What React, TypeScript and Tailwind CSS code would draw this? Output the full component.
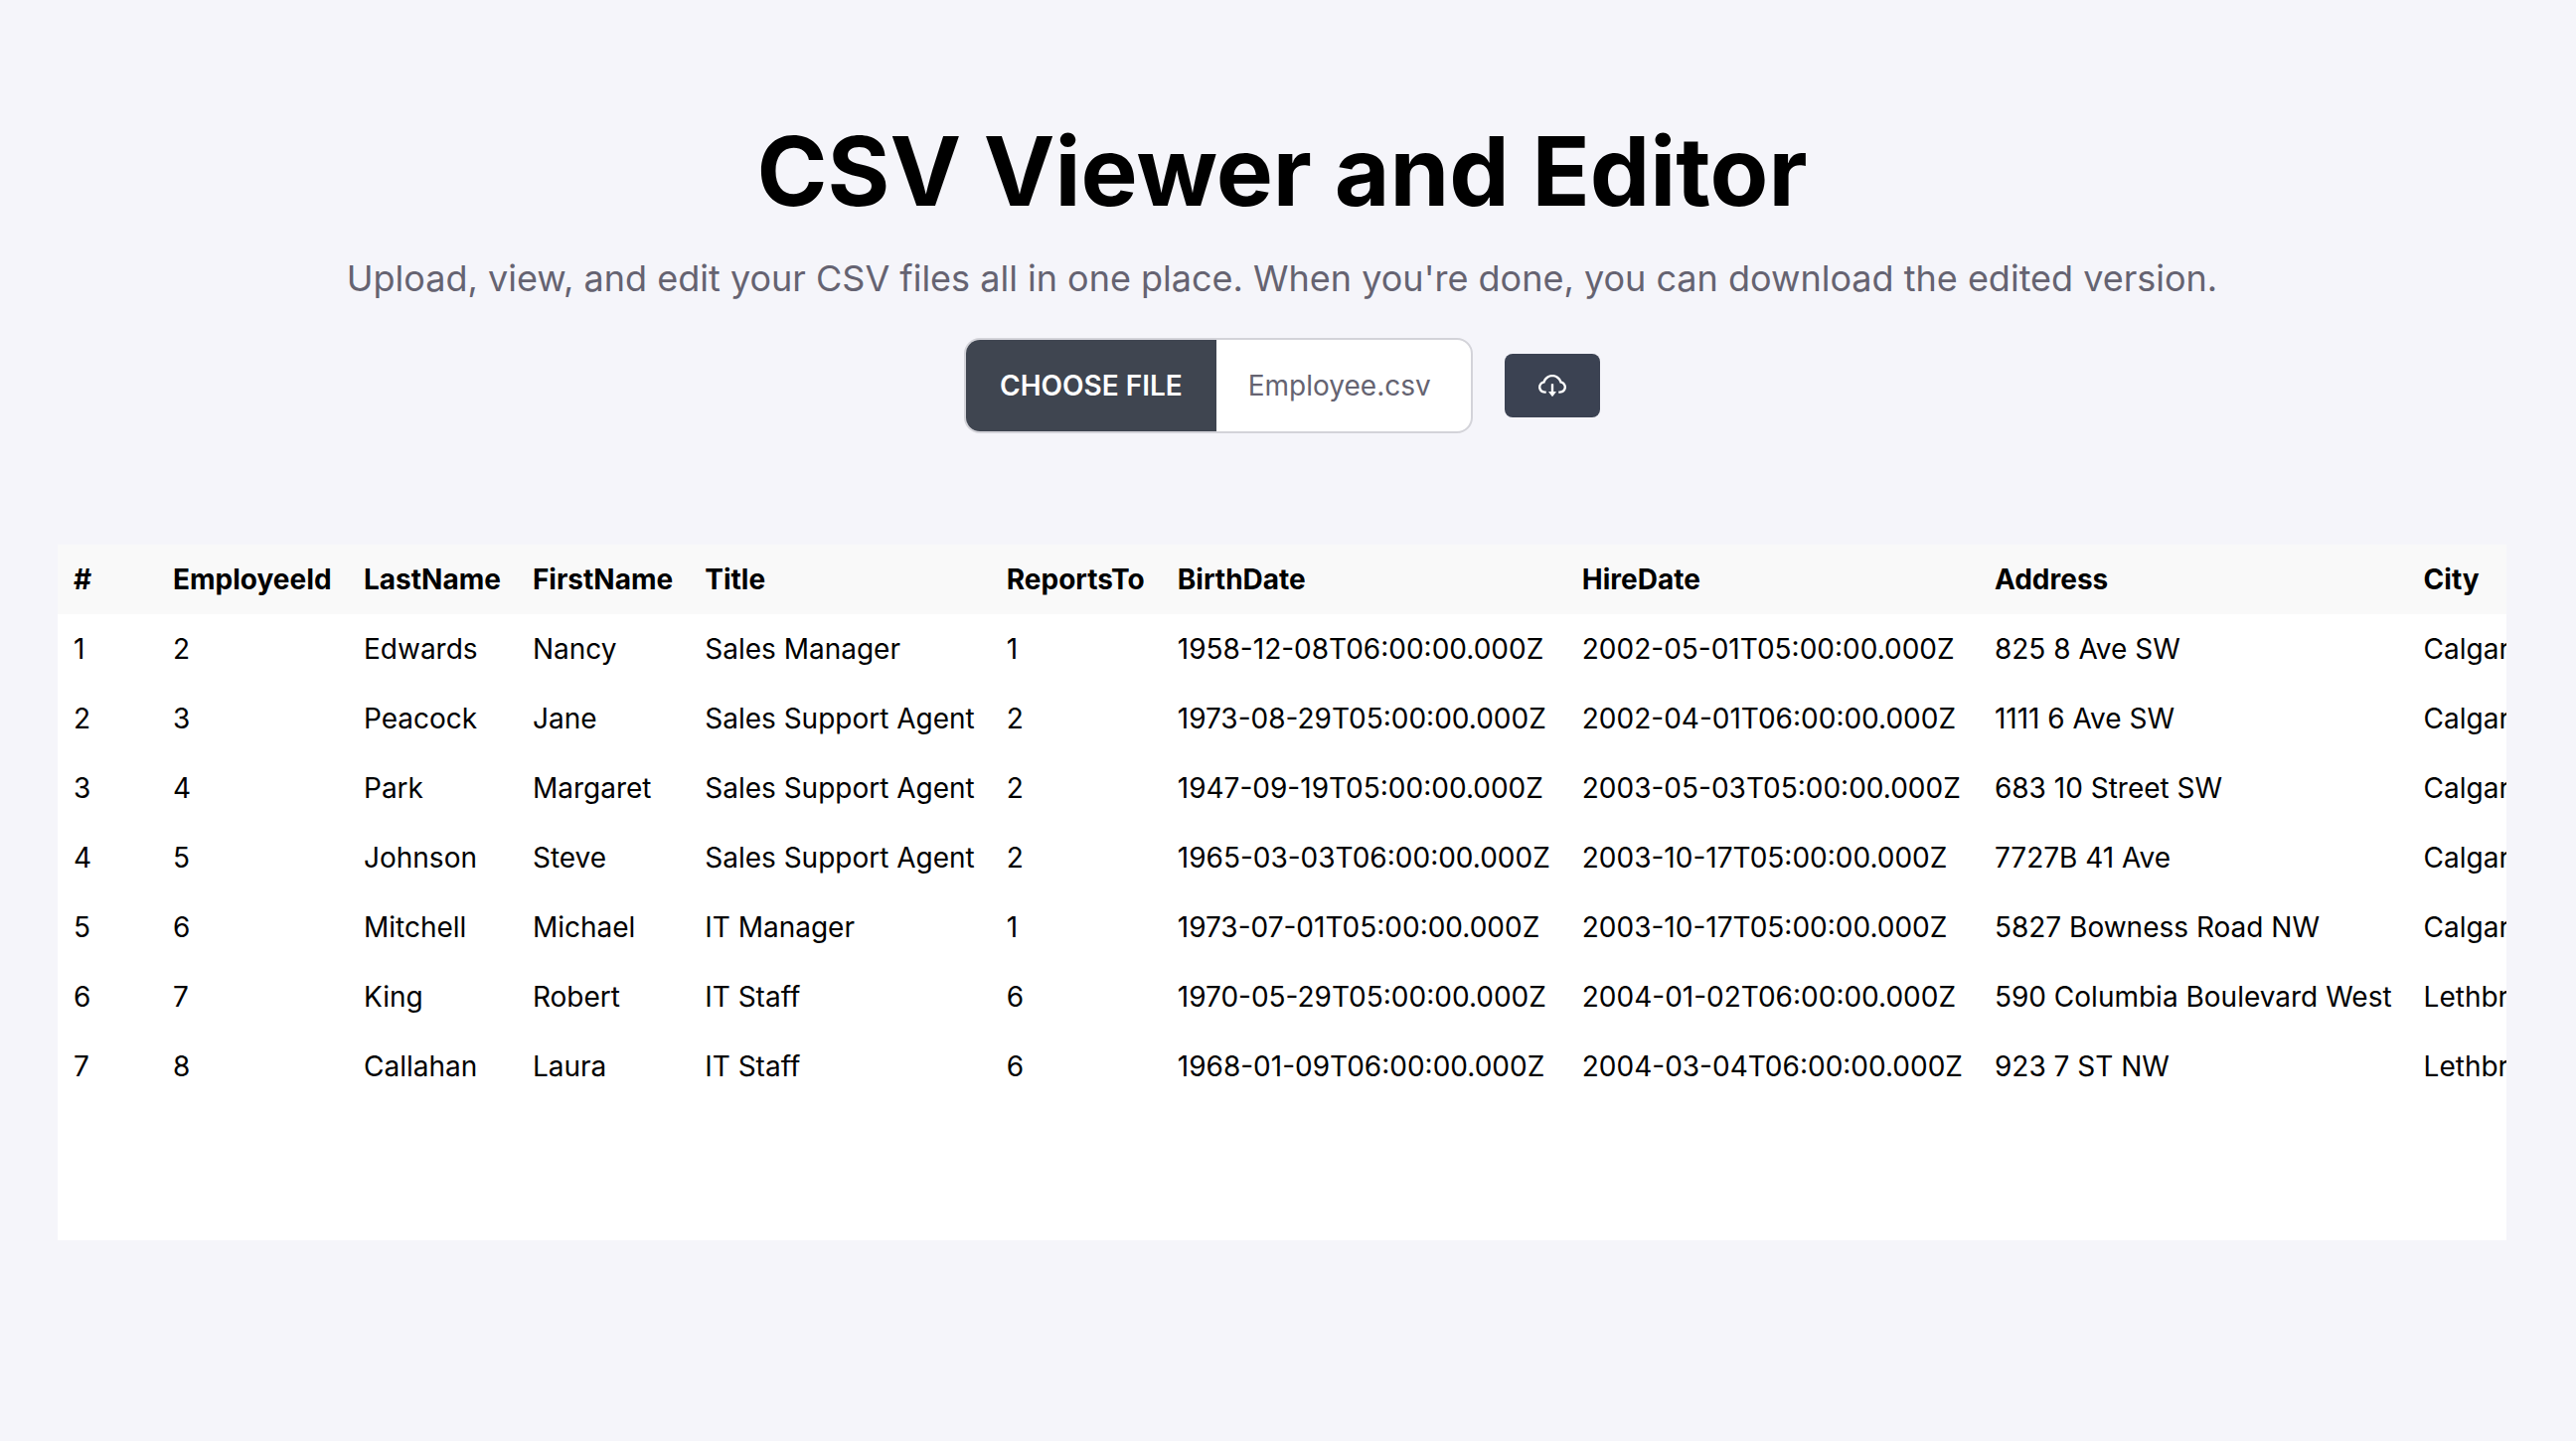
import { AiOutlineCloudDownload } from "react-icons/ai";

const columns = [
  { name: "#", width: "min-w-[100px]" },
  { name: "EmployeeId", width: "min-w-48" },
  { name: "LastName", width: "" },
  { name: "FirstName", width: "" },
  { name: "Title", width: "" },
  { name: "ReportsTo", width: "min-w-[172px]" },
  { name: "BirthDate", width: "" },
  { name: "HireDate", width: "" },
  { name: "Address", width: "" },
  { name: "City", width: "" },
];

const rows = [
  ["1", "2", "Edwards", "Nancy", "Sales Manager", "1", "1958-12-08T06:00:00.000Z", "2002-05-01T05:00:00.000Z", "825 8 Ave SW", "Calgary"],
  ["2", "3", "Peacock", "Jane", "Sales Support Agent", "2", "1973-08-29T05:00:00.000Z", "2002-04-01T06:00:00.000Z", "1111 6 Ave SW", "Calgary"],
  ["3", "4", "Park", "Margaret", "Sales Support Agent", "2", "1947-09-19T05:00:00.000Z", "2003-05-03T05:00:00.000Z", "683 10 Street SW", "Calgary"],
  ["4", "5", "Johnson", "Steve", "Sales Support Agent", "2", "1965-03-03T06:00:00.000Z", "2003-10-17T05:00:00.000Z", "7727B 41 Ave", "Calgary"],
  ["5", "6", "Mitchell", "Michael", "IT Manager", "1", "1973-07-01T05:00:00.000Z", "2003-10-17T05:00:00.000Z", "5827 Bowness Road NW", "Calgary"],
  ["6", "7", "King", "Robert", "IT Staff", "6", "1970-05-29T05:00:00.000Z", "2004-01-02T06:00:00.000Z", "590 Columbia Boulevard West", "Lethbridge"],
  ["7", "8", "Callahan", "Laura", "IT Staff", "6", "1968-01-09T06:00:00.000Z", "2004-03-04T06:00:00.000Z", "923 7 ST NW", "Lethbridge"],
];

function FilePicker() {
  return (
    <label
      htmlFor="csv-file"
      className="relative flex h-24 w-[512px] cursor-pointer overflow-hidden rounded-2xl border-2 border-[#d3d3d9] bg-white text-[28px]"
    >
      <input id="csv-file" type="file" accept=".csv" className="sr-only" />
      <span className="flex items-center bg-[#3f4550] px-[34px] font-semibold text-white">
        CHOOSE FILE
      </span>
      <span className="flex items-center px-8 text-[#656371]">Employee.csv</span>
    </label>
  );
}

function EmployeeTable() {
  return (
    <div className="min-h-[700px] overflow-x-auto bg-white [scrollbar-width:none]">
      <table className="w-max whitespace-nowrap text-left text-[28px] leading-[38px]">
        <thead className="bg-[#f9f9f9]">
          <tr>
            {columns.map(({ name, width }) => (
              <th key={name} scope="col" className={`p-4 font-bold ${width}`}>
                {name}
              </th>
            ))}
          </tr>
        </thead>
        <tbody>
          {rows.map((row) => (
            <tr key={row[0]}>
              {row.map((value, i) => (
                <td key={columns[i].name} className="p-4">
                  {value}
                </td>
              ))}
            </tr>
          ))}
        </tbody>
      </table>
    </div>
  );
}

export default function App() {
  return (
    <main className="min-h-screen bg-[#f5f5fa] pt-[124px] pr-[70px] pb-16 pl-[58px] font-[Inter,sans-serif] text-black">
      <header className="flex flex-col items-center text-center">
        <h1 className="text-8xl font-bold">CSV Viewer and Editor</h1>
        <p className="mt-10 text-4xl text-[#656371]">
          Upload, view, and edit your CSV files all in one place. When you're done, you can download the edited version.
        </p>
        <div className="mt-10 flex items-center gap-8">
          <FilePicker />
          <button
            type="button"
            aria-label="Download CSV"
            className="flex h-16 w-24 items-center justify-center rounded-lg bg-[#3b4252] text-white"
          >
            <AiOutlineCloudDownload className="size-8" />
          </button>
        </div>
      </header>
      <section className="mt-28" aria-label="Employees">
        <EmployeeTable />
      </section>
    </main>
  );
}
